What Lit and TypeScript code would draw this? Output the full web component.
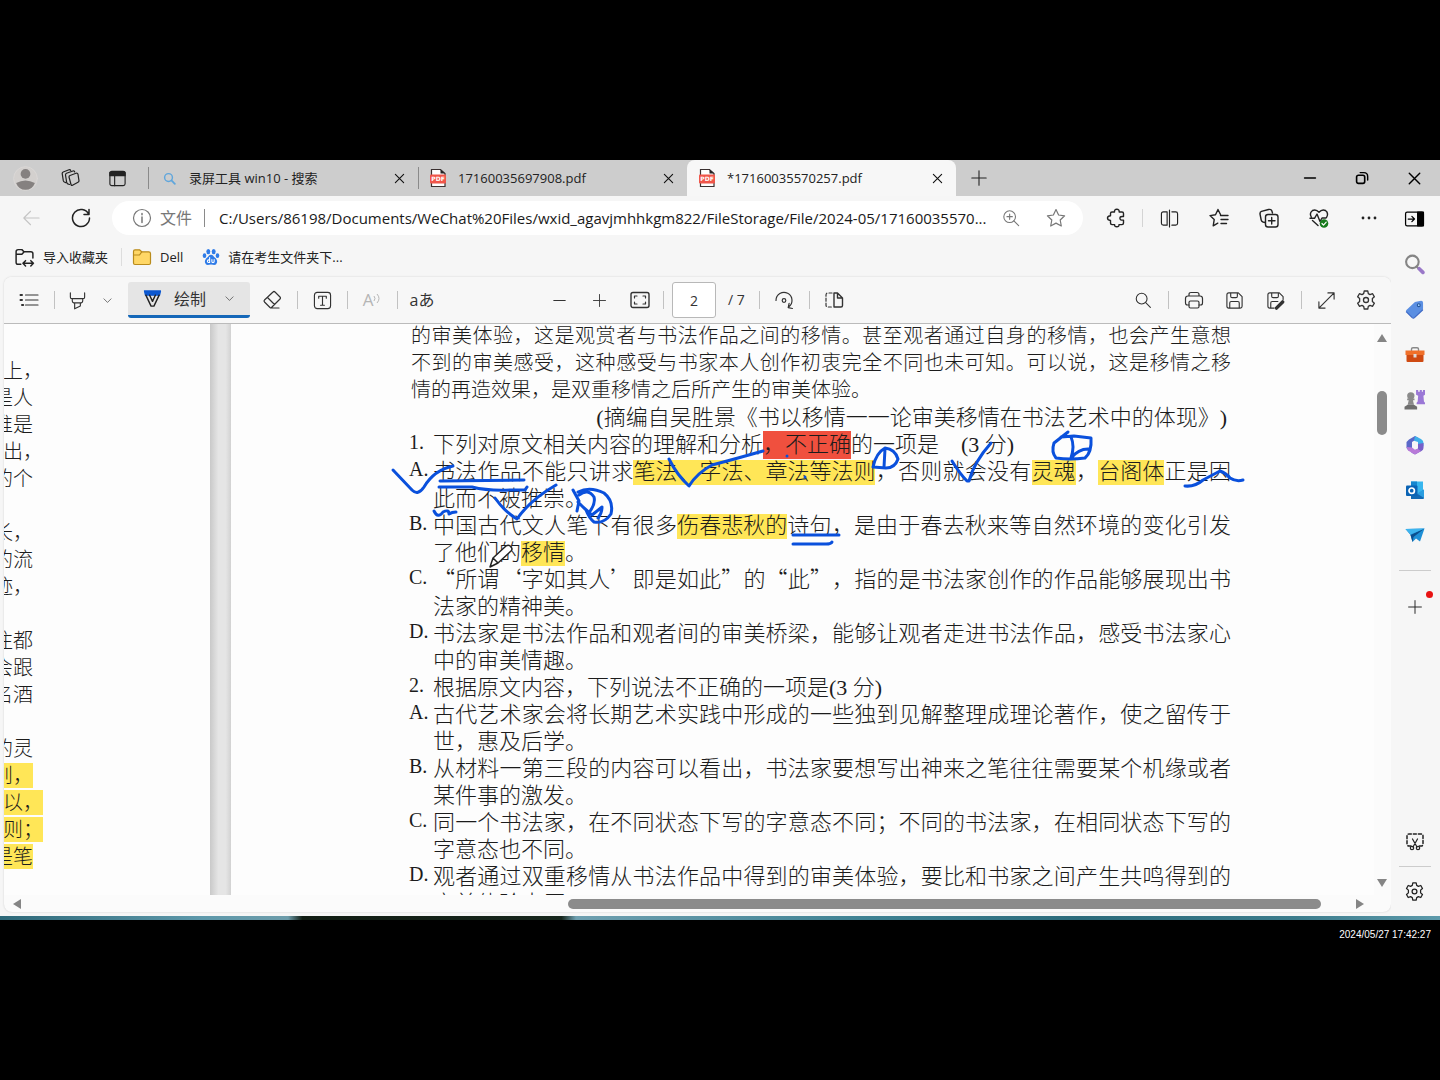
import { LitElement, html, css, svg, nothing, TemplateResult } from "lit";
import { customElement, property } from "lit/decorators.js";

const hexGear = svg`<path d="M8.4 1.8h3.2l.5 2.4 1.6.9 2.3-.8 1.6 2.8-1.8 1.6v2.6l1.8 1.6-1.6 2.8-2.3-.8-1.6.9-.5 2.4H8.4l-.5-2.4-1.6-.9-2.3.8-1.6-2.8 1.8-1.6V8.7L2.4 7.1 4 4.3l2.3.8 1.6-.9z"/><circle cx="10" cy="10" r="2.3"/>`;

const ICONS: Record<string, TemplateResult> = {
  workspace: svg`<path d="M9 7.500l6-2.200q1.500-.5 2 1l1 6.500q0 1-1 1.500l-5.500 3q-1.200.5-1.500-.8L8 9q-.1-1 1-1.500z"/><path d="M8.500 16.500l-1.700-.6Q6 15.500 5.700 14.500L4.500 7q-.1-1.200 1-1.700L12 3q1.300-.4 1.700 1"/><path d="M4.800 14.600l-1.500-.6q-.8-.4-1-1.300L1.200 5.600q0-1.200 1-1.600L8 1.700q1.200-.4 1.700.8"/>`,
  tabpane: svg`<rect x="2" y="2.500" width="16" height="15" rx="2"/><path d="M2 3.500h16v3.500H2z" fill="currentColor"/><path d="M7 7v10.500"/>`,
  find: svg`<circle cx="8.500" cy="8.500" r="6"/><path d="M13 13l5.200 5.200"/>`,
  tabFind: svg`<circle cx="8.500" cy="8.500" r="6" stroke-width="2.200"/><path d="M13 13l5.200 5.200" stroke-width="2.800"/>`,
  close: svg`<path d="M4.500 4.500l11 11M15.500 4.500l-11 11" stroke-width="1.500"/>`,
  plus: svg`<path d="M10 2v16M2 10h16"/>`,
  minus: svg`<path d="M4 10h12"/>`,
  winmin: svg`<path d="M4 10h12" stroke-width="1.800"/>`,
  restore: svg`<rect x="4" y="7" width="9" height="9" rx="2" stroke-width="1.800"/><path d="M8 4h4q4.300 0 4.300 4.300v4" stroke-width="1.600"/>`,
  back: svg`<path d="M19 10H2M9.500 2.500L2 10l7.500 7.500"/>`,
  reload: svg`<path d="M17.600 6.200A8.500 8.500 0 1 0 18.500 10M18 1.500v5h-5" stroke-width="1.500"/>`,
  info: svg`<circle cx="10" cy="10" r="8.500"/><path d="M10 9v5.500M10 5.500v1.200" stroke-width="1.500"/>`,
  zoomin: svg`<circle cx="8.500" cy="8.500" r="6.500"/><path d="M13.200 13.200L18.500 18.500M8.500 5.500v6M5.500 8.500h6"/>`,
  star: svg`<path d="M10 1.500l2.600 5.500 6 .8-4.400 4.200 1.100 6L10 15.100 4.700 18l1.100-6L1.400 7.800l6-.8z"/>`,
  puzzle: svg`<path d="M6 4h2.500Q8.300 1.200 10.800 1.200T13.200 4H16q1.500 0 1.500 1.500v3q-3.600-.4-3.600 1.800t3.600 1.800v3q0 1.500-1.500 1.500h-3q.2 2.200-2.200 2.200t-2.200-2.200H6q-1.500 0-1.500-1.500v-2.600q-3-.2-3-2.400t3-2.400V5.500Q4.500 4 6 4z" stroke-width="1.400"/>`,
  split: svg`<path d="M7.500 3H3.500Q1.500 3 1.500 5v10q0 2 2 2h4zM12.500 3h4q2 0 2 2v10q0 2-2 2h-4M10 1v18"/>`,
  favs: svg`<path d="M11.500 6.500L9 1.500 6.500 6.800 1 7.600l4.200 4-1 6.200 4.600-2.600M11.500 7.500H19M12 11.500h7M12 15.500h5.500" stroke-width="1.400"/>`,
  collect: svg`<rect x="6.500" y="6.500" width="12.500" height="12.500" rx="2.500" stroke-width="1.400"/><path d="M12.700 9.500v6.500M9.500 12.700h6.500M6 14.500L4 14Q2.500 13.500 2.200 12L1 6q-.2-2 1.500-2.600L9.500 1.500Q12 1 12.800 2.800L13.500 5" stroke-width="1.400"/>`,
  health: svg`<path d="M17.500 9.500Q20 5 16.500 2.500 13 .8 10 4.200 7 .8 3.500 2.500 0 5 2.300 9M3.500 12.500L9 17.500M1 10.300h4.500L8 6l3 7.500 2-3.500h4" stroke-width="1.400"/><circle cx="15" cy="15.500" r="4.300" fill="#177b1c" stroke="none"/><path d="M13 15.500l1.500 1.600 2.700-3" stroke="#fff"/>`,
  more: svg`<circle cx="4" cy="10" r="1.400" fill="currentColor" stroke="none"/><circle cx="10" cy="10" r="1.400" fill="currentColor" stroke="none"/><circle cx="16" cy="10" r="1.400" fill="currentColor" stroke="none"/>`,
  dock: svg`<rect x="1.500" y="4" width="17" height="13" rx="1.500"/><path d="M13 4h5.500v13H13z" fill="currentColor"/><path d="M4 10.500h6M7.500 8l2.500 2.500L7.500 13"/>`,
  importer: svg`<path d="M6.500 16.500H4q-2 0-2-2v-10q0-2 2-2h3.500l2 2H16q2 0 2 2v4M2 7h5.500l2-2.200M8.500 15.500h10M11 13l-2.500 2.500L11 18M16 13l2.500 2.500L16 18" stroke-width="1.400"/>`,
  folder: svg`<path d="M1.500 16V4.500Q1.500 2.800 3 2.800h4.500l2.200 2h7q1.800 0 1.800 1.800V16q0 1.500-1.500 1.500H3q-1.500 0-1.500-1.500z" fill="#ffd766" stroke="#b98b1c"/><path d="M1.500 8h6l2.200-3.200" stroke="#b98b1c"/>`,
  paw: svg`<g fill="#2e7be8" stroke="none"><ellipse cx="7" cy="4" rx="2.200" ry="3"/><ellipse cx="13" cy="4" rx="2.200" ry="3"/><ellipse cx="2.800" cy="8.500" rx="2" ry="2.700"/><ellipse cx="17.200" cy="8.500" rx="2" ry="2.700"/><path d="M10 7.500q2.200 0 3.500 2.500 4 3 3.200 6-1 3.500-4.500 2.600-2.200-.4-4.400 0Q4.300 19.500 3.300 16q-.7-3 3.200-6Q7.800 7.500 10 7.500z"/></g><path d="M8.500 10.500v5.500M8.500 13.200h-1q-1.500 0-1.500 1.500t1.500 1.400h1M11 12.800v2.200q0 1.200 1.300 1.100 1.200 0 1.200-1.100v-2.200" stroke="#fff"/>`,
  list: svg`<path d="M6.500 5H19M6.500 10H19M6.500 15H19"/><path d="M1.500 5h1.500M1.500 10h1.500M3 15h1.200" stroke-width="2"/>`,
  marker: svg`<path d="M2.500 2v4.500Q2.500 8 4 8h12q1.500 0 1.500-1.500V2M4.500 8v2.500q0 1.500 1.500 2h8q1.500-.5 1.500-2V8M7 12.800v6l6-3v-3"/>`,
  chev: svg`<path d="M3.500 7l6.500 6.500L16.500 7"/>`,
  pen: svg`<path d="M1.500 2h17l-1 4.500h-15z" fill="#0b57d0" stroke="#0b57d0"/><path d="M3 6.500l5.500 11.500h3L17 6.500M7 6.500l3 6.500 3-6.500" stroke="#222" stroke-width="1.500"/>`,
  eraser: svg`<path d="M8 17.500L2.500 12q-1-1 0-2L11 2q1-1 2 0l5 5q1 1 0 2l-8.500 8.500q-.7.700-1.500 0zM5.500 7.500l7 7M9 18h8"/>`,
  textbox: svg`<rect x="1.500" y="1.500" width="17" height="17" rx="3"/><path d="M6 7.500V5.500h8v2M10 5.500v9.500M8 15h4"/>`,
  fit: svg`<rect x="1" y="2.500" width="18" height="15" rx="2" stroke-width="1.400"/><path d="M4.500 8V6h2.500M13 6h2.500v2M15.500 12v2H13M7 14H4.500v-2"/>`,
  rotate: svg`<path d="M2 10.500A8 8 0 1 1 14.500 17M18.500 18.500l-4.300-.8.9-4.400"/><circle cx="10" cy="10.500" r="1.800"/>`,
  pageview: svg`<path d="M10 3v14h7q1.500 0 1.500-1.500V8l-5-5zM13.500 3v5h5" stroke-width="1.400"/><path d="M8 3H4Q2 3 2 5v10q0 2 2 2h4" stroke-dasharray="3 2"/>`,
  print: svg`<path d="M5 6V4.500Q5 2.500 7 2.500h6q2 0 2 2V6M5 15H3.500Q1.500 15 1.500 13V8.500Q1.500 6 4 6h12q2.500 0 2.500 2.500V13q0 2-2 2H15"/><rect x="5" y="11" width="10" height="7" rx="1.500"/>`,
  save: svg`<path d="M4 2h10l4 4v10q0 2-2 2H4q-2 0-2-2V4q0-2 2-2zM6 2v3.500Q6 7 7.500 7h4Q13 7 13 5.500V2M5 18v-5.500Q5 11 6.500 11h7q1.500 0 1.500 1.500V18"/>`,
  saveas: svg`<path d="M8.500 18H4q-2 0-2-2V4q0-2 2-2h10l4 4v3M6 2v3.500Q6 7 7.500 7h4Q13 7 13 5.500V2M5 18v-5.500Q5 11 6.500 11h6"/><path d="M11 18l6.500-6.500" stroke-width="3.600"/>`,
  expand: svg`<path d="M2 18L18 2M11.500 2H18v6.500M2 11.500V18h6.500"/>`,
  gear: hexGear,
  snip: svg`<path d="M6 15H4q-2 0-2-2V5q0-2 2-2h12q2 0 2 2v8q0 2-2 2h-2" stroke-dasharray="3 2" stroke-width="1.500"/><path d="M7.500 8l4.500 8M12.500 8L8 16"/><circle cx="7" cy="17" r="1.700"/><circle cx="13" cy="17" r="1.700"/>`,
  avatar: svg`<circle cx="10" cy="10" r="9.500" fill="#d3d0ce" stroke="#dcdad8" stroke-width=".6"/><circle cx="10" cy="6.300" r="3.900" fill="#858180" stroke="none"/><path d="M2.500 13.500q7.500-4 15 0-2 5.500-7.500 5.500t-7.500-5.500z" fill="#858180" stroke="none"/>`,
  sideSearch: svg`<path d="M12 12l2 2" stroke="#888" stroke-width="2"/><path d="M14.500 14l3.500 3.500" stroke="#9a78c8" stroke-width="3.400"/><circle cx="8" cy="7.500" r="6" stroke="#858585" stroke-width="2"/>`,
  tag: svg`<path d="M10.500 2.200L17 .8q2 0 2 2V9q0 1-.8 1.600L10 18.500q-1.200 1-2.400 0L1.500 12.700q-1-1.200 0-2.300z" fill="#5b8fe2" stroke="none"/><path d="M1.500 12.500L7.600 18.500q1.200 1 2.400 0l8.500-8" stroke="#3a66c4"/><circle cx="14.500" cy="5.500" r="1.500" fill="#a8d4ff" stroke="#24569c"/>`,
  toolbox: svg`<path d="M6.500 5.500V4Q6.500 2.800 8 2.800h4q1.500 0 1.500 1.200v1.500" stroke="#888" stroke-width="1.400"/><path d="M.5 5.500h19v4.500h-19z" fill="#f0702a" stroke="none"/><path d="M1.500 10h17v6q0 1-1 1h-15q-1 0-1-1z" fill="#cf4a12" stroke="none"/><path d="M8.500 9h3v3.500h-3z" fill="#dcdcdc" stroke="none"/>`,
  chess: svg`<path d="M11.500 1h2v1.500h1.500V1h2v1.500h1V1h2v4.500l-1.500 1 .5 5.500 1 1v1.500h-8V13l1-1 .5-5.500-2-1z" fill="#9b78d6" stroke="none"/><g fill="#8a8a8a" stroke="none"><circle cx="6.500" cy="6.500" r="3.500"/><path d="M3 9h7v1.800H8.500l1 4.200H3.500l1-4.200H3z"/><path d="M3.500 15h6l3 2v2.500H.5V17z" fill="#6e6e6e"/></g>`,
  m365: svg`<path d="M4 4.500L10 1l3.500 2L7 7v6.500l-3.500 2L1.500 13V7z" fill="#5a68c8" stroke="none"/><path d="M10 1l6 3q2.500 1.500 2.500 4v3.500L13 9V7L9 5.800z" fill="#3fb0ea" stroke="none"/><path d="M18.500 8v5q0 2-2 3L10 19.500 6 17.500l7-4V9z" fill="#7860c9" stroke="none"/><path d="M1.500 12l5.500.5 3 2.300 2.500-1L16 16l-6 3.500-7-4z" fill="#b87ad8" stroke="none"/>`,
  outlook: svg`<path d="M6 1.500h12V17H6z" fill="#38b6ee" stroke="none"/><path d="M6 1.500h6V8H6z" fill="#1586cf" stroke="none"/><path d="M19 9.500V18q0 1-1 1H6v-4.500h6z" fill="#1068b4" stroke="none"/><path d="M12 13.500l7-4V18z" fill="#2a9de0" stroke="none"/><rect x="1" y="5.500" width="11.500" height="10.500" rx="1" fill="#0a63b4" stroke="none"/><circle cx="6.700" cy="10.700" r="2.700" stroke="#fff" stroke-width="1.700"/>`,
  plane: svg`<path d="M.5 4L19.500 3.500 15 16.500l-4-3L7.500 17 5.500 10z" fill="#1e8fd6" stroke="none"/><path d="M5.500 10L19.500 3.500 8.500 12 7.500 17z" fill="#0b4f8e" stroke="none"/><path d="M.5 4L19.500 3.500 5.500 9.500z" fill="#3db4ee" stroke="none"/>`,
};

@customElement("ui-icon")
export class UiIcon extends LitElement {
  @property() name = "";
  @property({ type: Number }) size = 20;

  static styles = css`
    :host { display: inline-flex; flex: none; }
    svg { display: block; fill: none; stroke: currentColor; stroke-width: 1.2; stroke-linecap: round; stroke-linejoin: round; }
  `;

  render() {
    return html`<svg width=${this.size} height=${this.size} viewBox="0 0 20 20" aria-hidden="true">${ICONS[this.name] ?? nothing}</svg>`;
  }
}

@customElement("pdf-badge")
export class PdfBadge extends LitElement {
  static styles = css`
    :host { display: inline-flex; flex: none; }
    svg { display: block; }
    .word { font: bold 6px "DejaVu Sans", sans-serif; fill: #fff; }
  `;

  render() {
    return html`<svg width="18" height="20" viewBox="0 0 18 20" aria-hidden="true">
      <path d="M2.500 1.500h9L16 5.500V18.500H2.500z" fill="#fff" stroke="#3a3030" stroke-width="1.200" />
      <path d="M11.500 1.500v4H16z" fill="#222" />
      <rect x="1" y="6.500" width="16" height="9" rx="1" fill="#f0564a" />
      <text class="word" x="9" y="13" text-anchor="middle">PDF</text>
    </svg>`;
  }
}

type MarginLine = { text: string; wide?: boolean; marked?: boolean };

const MARGIN_LINES: MarginLine[] = [
  { text: "上，", wide: true },
  { text: "是人" },
  { text: "谁是" },
  { text: "出，", wide: true },
  { text: "的个" },
  { text: "" },
  { text: "长，" },
  { text: "的流" },
  { text: "迹，" },
  { text: "" },
  { text: "往都" },
  { text: "会跟" },
  { text: "名酒" },
  { text: "" },
  { text: "的灵" },
  { text: "则，", marked: true },
  { text: "以，", wide: true, marked: true },
  { text: "则；", wide: true, marked: true },
  { text: "是笔", marked: true },
];

type Row = { label?: string; body: TemplateResult | string; full?: boolean };

const ROWS: Row[] = [
  {
    label: "1.",
    body: html`下列对原文相关内容的理解和分析<mark class="red">，不正确</mark>的一项是<span class="roman">&emsp;(3 分)</span>`,
  },
  {
    label: "A.",
    full: true,
    body: html`书法作品不能只讲求<mark>笔法、字法、章法等法则</mark>，否则就会没有<mark>灵魂</mark>，<mark>台阁体</mark>正是因`,
  },
  { body: "此而不被推崇。" },
  {
    label: "B.",
    full: true,
    body: html`中国古代文人笔下有很多<mark>伤春悲秋的</mark>诗句，是由于春去秋来等自然环境的变化引发`,
  },
  { body: html`了他们的<mark>移情</mark>。` },
  { label: "C.", full: true, body: "“所谓‘字如其人’即是如此”的“此”，指的是书法家创作的作品能够展现出书" },
  { body: "法家的精神美。" },
  { label: "D.", full: true, body: "书法家是书法作品和观者间的审美桥梁，能够让观者走进书法作品，感受书法家心" },
  { body: "中的审美情趣。" },
  { label: "2.", body: html`根据原文内容，下列说法不正确的一项是<span class="roman">(3 分)</span>` },
  { label: "A.", full: true, body: "古代艺术家会将长期艺术实践中形成的一些独到见解整理成理论著作，使之留传于" },
  { body: "世，惠及后学。" },
  { label: "B.", full: true, body: "从材料一第三段的内容可以看出，书法家要想写出神来之笔往往需要某个机缘或者" },
  { body: "某件事的激发。" },
  { label: "C.", full: true, body: "同一个书法家，在不同状态下写的字意态不同；不同的书法家，在相同状态下写的" },
  { body: "字意态也不同。" },
  { label: "D.", full: true, body: "观者通过双重移情从书法作品中得到的审美体验，要比和书家之间产生共鸣得到的" },
  { body: "审美体验丰厚。" },
];

const INK: string[] = [
  "M393 470L412 490Q418 496 424 487Q434 470 453 466",
  "M440 481L524 480",
  "M439 487H472Q488 491 510 490H525L527 487",
  "M495 498Q505 512 517 519Q530 500 556 485",
  "M434 511Q438 519 443 512Q449 509 449 514Q452 512 456 512",
  "M573 490L579 501L577 511M579 495Q588 488 594 497Q596 504 588 514M578 492Q590 486 604 493Q614 501 611 514Q604 524 594 522Q589 518 586 510L578 502M582 506L592 515L602 507Q602 513 598 518",
  "M669 459Q677 475 689 486Q697 473 712 465Q735 459 763 451",
  "M787 456V456M805 477V477",
  "M793 535H839",
  "M793 544H826Q831 544 832 542",
  "M873 467Q876 453 885 448Q895 449 898 459Q895 468 886 468L873 467M885 449L884 467",
  "M952 461Q960 474 967 481H969Q974 462 991 443",
  "M1068 432L1054 443Q1051 452 1056 458Q1070 460 1085 458Q1092 452 1091 438L1074 436L1061 437M1071 437Q1075 446 1071 458Q1079 448 1090 449",
  "M1185 486Q1195 487 1203 480L1220 471Q1226 473 1230 478Q1236 482 1243 480",
];

@customElement("exam-pages")
export class ExamPages extends LitElement {
  static styles = css`
    :host {
      display: flex; flex: 1; min-width: 0; overflow: hidden; background: #fdfdfd; color: #1c1c1c;
      font: 300 22px/27px "Noto Sans CJK SC", sans-serif;
      text-spacing-trim: space-all;
    }
    .prev { flex: none; width: 206px; padding-top: 34px; box-sizing: border-box; font-size: 20px; line-height: 24px; }
    .sliver { display: flex; justify-content: flex-end; height: 27px; width: 29px; overflow: hidden; white-space: nowrap; }
    .sliver.wide { width: 39px; }
    .sliver.marked { height: 25px; margin-bottom: 2px; background: #ffe657; }
    .gap { flex: none; width: 21px; background: linear-gradient(90deg, #c9c9c9, #e5e5e5 40%, #e5e5e5 75%, #d2d2d2); }
    .page { position: relative; flex: 1; min-width: 0; padding-left: 178px; }
    .sheet { width: 822px; margin-top: -3px; }
    .essay { margin: 0; padding-left: 2px; font-size: 20px; }
    .line { display: block; white-space: nowrap; height: 27px; }
    .full { text-align: justify; text-align-last: justify; white-space: normal; }
    .source { margin: 0; padding-right: 4px; height: 27px; text-align: right; white-space: nowrap; }
    .row { display: grid; grid-template-columns: 24px 1fr; margin: 0; height: 27px; }
    .label, .roman { font-family: "Liberation Serif", "Noto Sans CJK SC", serif; }
    .label { font-size: 20px; }
    mark { display: inline-block; line-height: 19px; height: 25px; background: #ffe657; color: inherit; }
    mark.red { background: #f0503e; line-height: 23px; height: 28px; }
    .ink { position: absolute; left: 0; top: 0; fill: none; stroke: #0a50dc; stroke-width: 3; stroke-linecap: round; stroke-linejoin: round; }
    .pencil { stroke: #222; stroke-width: 1.5; fill: #fff; }
  `;

  render() {
    return html`
      <div class="prev">
        ${MARGIN_LINES.map(
          (l) => html`<div class="sliver ${l.wide ? "wide" : ""} ${l.marked ? "marked" : ""}"><span>${l.text}</span></div>`,
        )}
      </div>
      <div class="gap"></div>
      <article class="page">
        <div class="sheet">
          <p class="essay">
            <span class="line full">的审美体验，这是观赏者与书法作品之间的移情。甚至观者通过自身的移情，也会产生意想</span>
            <span class="line full">不到的审美感受，这种感受与书家本人创作初衷完全不同也未可知。可以说，这是移情之移</span>
            <span class="line">情的再造效果，是双重移情之后所产生的审美体验。</span>
          </p>
          <p class="source"><span class="roman">(</span>摘编自吴胜景《书以移情一一论审美移情在书法艺术中的体现》<span class="roman">)</span></p>
          ${ROWS.map(
            (r) => html`<p class="row"><span class="label">${r.label ?? ""}</span><span class="line ${r.full ? "full" : ""}">${r.body}</span></p>`,
          )}
        </div>
        <svg class="ink" width="1143" height="572" viewBox="231 324 1143 572" aria-hidden="true">
          ${INK.map((d) => svg`<path d=${d} />`)}
          <path class="pencil" d="M490 567L493 558L506 546Q509 544 511 547Q513 549 511 551L498 563ZM493 558L498 563" />
        </svg>
      </article>
    `;
  }
}

@customElement("app-root")
export class AppRoot extends LitElement {
  static styles = css`
    :host {
      display: flex; flex-direction: column; box-sizing: border-box; min-height: 100vh; padding-top: 160px; background: #000;
      font: 13px/20px "Open Sans", "Noto Sans CJK SC", sans-serif; color: #222;
    }
    * { box-sizing: border-box; }
    button, input { font: inherit; color: inherit; background: none; border: 0; padding: 0; margin: 0; }
    button, a { display: inline-flex; align-items: center; justify-content: center; flex: none; color: inherit; text-decoration: none; }
    .window { display: flex; flex-direction: column; height: calc(100vh - 324px); background: #f6f6f6; }
    .wallpaper { height: 4px; background: linear-gradient(90deg, #2d6878, #5d98aa 14%, #6d9caa 20%, #101c12 21%, #16261c 39%, #6fa0b0 40%, #3f8293 60%, #2c6b7b 75%, #3c7c8c 90%, #5d9aab); }
    .stamp { padding: 5px 9px 0 0; text-align: right; font-family: "Liberation Sans", sans-serif; font-size: 10px; color: #fff; }
    .tabs { display: flex; flex: none; height: 36px; background: #cdcdcd; padding-left: 2px; align-items: center; }
    .tabs > button { width: 46px; height: 36px; }
    .tabs .divider { margin-left: 8px; height: 22px; }
    .tabs .divider.between { margin: 0 -1px 0 0; }
    .divider { flex: none; width: 1px; height: 18px; background: #8a8a8a; }
    .tab { display: flex; align-items: center; gap: 11px; flex: 0 1 269px; min-width: 0; height: 36px; padding: 0 9px 0 11px; border-radius: 8px 8px 0 0; }
    .tab.active { background: #f7f7f7; }
    .tab .title { flex: 1; white-space: nowrap; overflow: hidden; }
    .tab button { width: 20px; height: 20px; color: #111; }
    .fav { display: inline-flex; width: 18px; justify-content: center; color: #5fa6dc; }
    .grow { flex: 1; }
    .tabs > .win { width: 52px; color: #000; }
    .address { display: flex; flex: none; align-items: center; height: 44px; padding: 0 6px; }
    .address > button { width: 50px; height: 36px; }
    .address > button.last { width: 40px; color: #000; }
    .address > button:disabled { color: #c4c4c4; }
    .address > .divider { margin: 0 1px; background: #d4d4d4; }
    .pill { display: flex; align-items: center; flex: 1; min-width: 0; height: 34px; margin: 0 8px 0 6px; padding: 0 5px 0 20px; border-radius: 17px; background: #fff; color: #777; }
    .scheme { margin: 0 12px 0 8px; font-size: 16px; white-space: nowrap; }
    .pill input { flex: 1; min-width: 0; padding-left: 14px; font-size: 15px; line-height: 24px; color: #1a1a1a; }
    .pill button { width: 45px; }
    .body { display: flex; flex: 1; min-height: 0; }
    .main { display: flex; flex-direction: column; flex: 1; min-width: 0; padding: 0 0 4px 4px; }
    .bookmarks { display: flex; flex: none; align-items: center; height: 37px; padding: 0 10px 3px; }
    .bookmarks a { gap: 8px; white-space: nowrap; }
    .bookmarks .divider { margin: 0 10px 0 13px; background: #ddd; }
    .bookmarks a + a { margin-left: 19px; }
    .viewer { display: flex; flex-direction: column; flex: 1; min-height: 0; border-radius: 8px; overflow: hidden; background: #fbfbfb; box-shadow: 0 0 2px #ccc; }
    .toolbar { display: grid; grid-template-columns: 1fr auto 1fr; flex: none; height: 47px; background: #f7f7f7; border-bottom: 1px solid #bbb; color: #333; }
    .group { display: flex; align-items: center; }
    .group.start { padding-left: 3px; }
    .group.end { padding-right: 5px; justify-content: flex-end; }
    .group button { width: 44px; height: 36px; }
    .group button.narrow { width: 40px; }
    .group button.mid { width: 41px; }
    .group button.drop { width: 20px; margin-right: 11px; }
    .group button.draw { width: 122px; gap: 12px; background: #e5e5e5; border-bottom: 3px solid #1467b8; border-radius: 3px; font-size: 16px; }
    .draw ui-icon:last-child { margin-left: 6px; }
    .cell { display: flex; flex: none; justify-content: center; width: 6px; }
    .cell.roomy { width: 10px; }
    .cell::before { content: ""; width: 1px; height: 18px; background: #c2c2c2; }
    .group button.dim { color: #b5b5b5; font-size: 17px; }
    .glyphs { font-size: 16px; }
    .group input { width: 44px; height: 36px; margin-left: 6px; border: 1px solid #b8b8b8; border-radius: 3px; background: #fff; text-align: center; font-size: 14px; }
    .total { width: 40px; padding-left: 12px; font-size: 14px; white-space: nowrap; }
    .canvas { display: flex; flex: 1; min-height: 0; }
    .vbar { display: flex; flex-direction: column; align-items: center; justify-content: space-between; flex: none; width: 17px; padding: 10px 2px 8px 0; }
    .vbar .thumb { width: 10px; height: 44px; border-radius: 5px; background: #8b8b8b; }
    .vtop { display: flex; flex-direction: column; align-items: center; gap: 49px; }
    .hbar { display: flex; align-items: center; flex: none; height: 17px; padding: 0 27px 0 9px; }
    .track { flex: 1; padding: 0 35px 0 547px; }
    .track .thumb { height: 10px; border-radius: 5px; background: #8b8b8b; }
    .arrow { display: block; fill: #858585; }
    .side { display: flex; flex-direction: column; align-items: center; flex: none; width: 49px; padding: 2px 2px 2px 0; background: #f6f6f6; }
    .side button { position: relative; width: 47px; height: 45px; }
    .side hr { width: 32px; margin: 3px 0 2px; border: 0; border-top: 1px solid #ccc; }
    .side hr.spaced { margin: 13px 0; }
    .dot { position: absolute; right: 5px; top: 7px; width: 7px; height: 7px; border-radius: 50%; background: #e81313; }
  `;

  private btn(label: string, icon: string, size = 20, cls = "", disabled = false) {
    return html`<button class=${cls} aria-label=${label} ?disabled=${disabled}><ui-icon name=${icon} .size=${size}></ui-icon></button>`;
  }

  private tab(title: string, pdf: boolean, active = false) {
    return html`<div class="tab ${active ? "active" : ""}">
      ${pdf ? html`<pdf-badge></pdf-badge>` : html`<span class="fav"><ui-icon name="tabFind" .size=${13}></ui-icon></span>`}
      <span class="title">${title}</span>
      ${this.btn("关闭标签页", "close", 15)}
    </div>`;
  }

  render() {
    return html`
      <div class="window">
        <div class="tabs">
          ${this.btn("个人资料", "avatar", 25)} ${this.btn("工作区", "workspace", 20)} ${this.btn("标签操作", "tabpane", 19)}
          <span class="divider"></span>
          ${this.tab("录屏工具 win10 - 搜索", false)}
          <span class="divider between"></span>
          ${this.tab("17160035697908.pdf", true)} ${this.tab("*17160035570257.pdf", true, true)}
          ${this.btn("新建标签页", "plus", 18)}
          <span class="grow"></span>
          ${this.btn("最小化", "winmin", 18, "win")} ${this.btn("还原", "restore", 18, "win")} ${this.btn("关闭", "close", 19, "win")}
        </div>
        <div class="address">
          ${this.btn("后退", "back", 18, "", true)} ${this.btn("刷新", "reload", 20)}
          <div class="pill">
            <ui-icon name="info" .size=${20}></ui-icon>
            <label class="scheme" for="url">文件</label>
            <span class="divider"></span>
            <input id="url" type="text" .value=${"C:/Users/86198/Documents/WeChat%20Files/wxid_agavjmhhkgm822/FileStorage/File/2024-05/17160035570..."} />
            ${this.btn("缩放", "zoomin", 18)} ${this.btn("收藏", "star", 20)}
          </div>
          ${this.btn("扩展", "puzzle", 20)}
          <span class="divider"></span>
          ${this.btn("分屏", "split", 19)} ${this.btn("收藏夹", "favs", 20)} ${this.btn("集锦", "collect", 20)}
          ${this.btn("性能", "health", 20)} ${this.btn("更多", "more", 20)} ${this.btn("边栏", "dock", 21, "last")}
        </div>
        <div class="body">
          <div class="main">
            <nav class="bookmarks">
              <a href="#import"><ui-icon name="importer" .size=${21}></ui-icon>导入收藏夹</a>
              <span class="divider"></span>
              <a href="#dell"><ui-icon name="folder" .size=${20}></ui-icon>Dell</a>
              <a href="#baidu"><ui-icon name="paw" .size=${18}></ui-icon>请在考生文件夹下...</a>
            </nav>
            <div class="viewer">
              <div class="toolbar">
                <div class="group start">
                  ${this.btn("目录", "list", 20)}<span class="cell"></span>
                  ${this.btn("突出显示", "marker", 19, "narrow")} ${this.btn("突出显示颜色", "chev", 11, "drop")}
                  <button class="draw"><ui-icon name="pen" .size=${19}></ui-icon>绘制<ui-icon name="chev" .size=${11}></ui-icon></button>
                  ${this.btn("擦除", "eraser", 20)}<span class="cell"></span>
                  ${this.btn("添加文本", "textbox", 19)}<span class="cell"></span>
                  <button class="dim">A<svg width="8" height="14" viewBox="0 0 8 14" fill="none" stroke="currentColor" aria-hidden="true"><path d="M1 3q2 2.500 0 5M4 1q4 4.500 0 9" /></svg></button><span class="cell"></span>
                  <button class="glyphs">aあ</button>
                </div>
                <div class="group">
                  ${this.btn("缩小", "minus", 19, "narrow")} ${this.btn("放大", "plus", 15, "narrow")} ${this.btn("适应宽度", "fit", 20, "mid")}
                  <span class="cell"></span>
                  <input id="pageno" type="text" aria-label="页码" .value=${"2"} />
                  <label class="total" for="pageno">/ 7</label>
                  <span class="cell"></span>${this.btn("旋转", "rotate", 20)}<span class="cell"></span>${this.btn("页面视图", "pageview", 20)}
                </div>
                <div class="group end">
                  ${this.btn("查找", "find", 18, "mid")}<span class="cell roomy"></span>
                  ${this.btn("打印", "print", 20, "mid")} ${this.btn("保存", "save", 19, "mid")} ${this.btn("另存为", "saveas", 19, "mid")}
                  <span class="cell roomy"></span>${this.btn("全屏", "expand", 19, "narrow")} ${this.btn("设置", "gear", 22, "narrow")}
                </div>
              </div>
              <div class="canvas">
                <exam-pages lang="zh-CN"></exam-pages>
                <div class="vbar">
                  <div class="vtop">
                    <svg class="arrow" width="10" height="8" viewBox="0 0 10 8"><path d="M5 0l5 8H0z" /></svg>
                    <div class="thumb"></div>
                  </div>
                  <svg class="arrow" width="10" height="8" viewBox="0 0 10 8"><path d="M0 0h10L5 8z" /></svg>
                </div>
              </div>
              <div class="hbar">
                <svg class="arrow" width="8" height="10" viewBox="0 0 8 10"><path d="M8 0v10L0 5z" /></svg>
                <div class="track"><div class="thumb"></div></div>
                <svg class="arrow" width="8" height="10" viewBox="0 0 8 10"><path d="M0 0l8 5-8 5z" /></svg>
              </div>
            </div>
          </div>
          <aside class="side">
            ${this.btn("搜索", "sideSearch", 21)} ${this.btn("购物", "tag", 19)} ${this.btn("工具", "toolbox", 20)}
            ${this.btn("游戏", "chess", 21)} ${this.btn("Microsoft 365", "m365", 20)} ${this.btn("Outlook", "outlook", 20)}
            ${this.btn("Drop", "plane", 20)}
            <hr class="spaced" />
            <button aria-label="自定义"><ui-icon name="plus" .size=${16}></ui-icon><span class="dot"></span></button>
            <span class="grow"></span>
            ${this.btn("屏幕截图", "snip", 20)}
            <hr />
            ${this.btn("边栏设置", "gear", 21)}
          </aside>
        </div>
      </div>
      <div class="wallpaper"></div>
      <div class="stamp">2024/05/27 17:42:27</div>
    `;
  }
}
